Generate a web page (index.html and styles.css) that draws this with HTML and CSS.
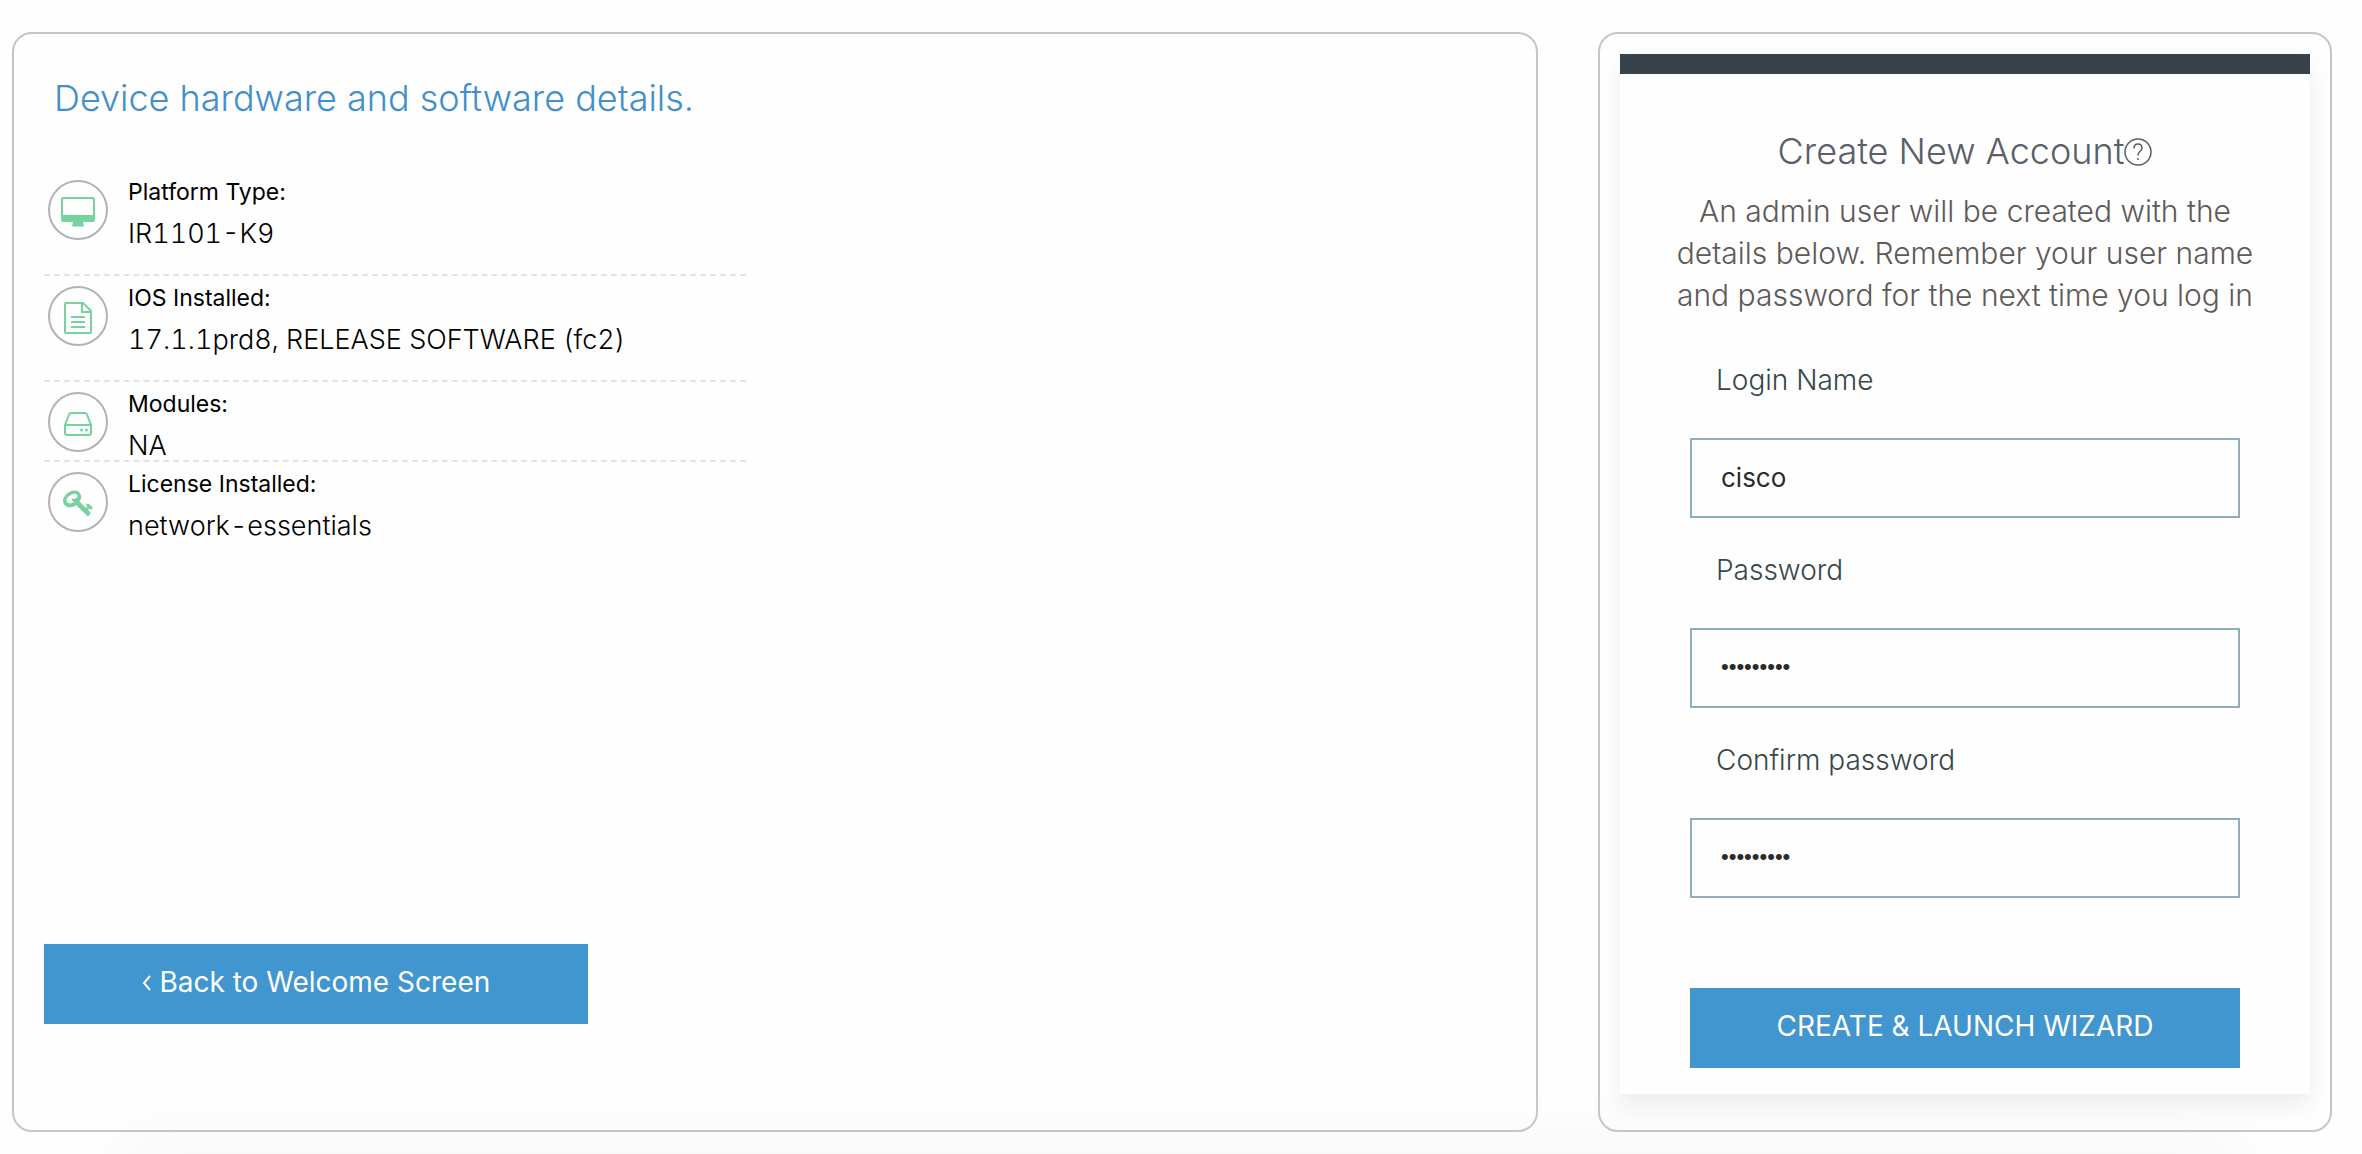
FILE: index.html
```html
<!DOCTYPE html>
<html lang="en">
<head>
    <meta charset="UTF-8">
    <meta name="viewport" content="width=device-width, initial-scale=1.0">
    <title>Create New Account</title>
    <link rel="stylesheet" href="styles.css">
</head>
<body>

    <main class="page">
        <section class="panel details">
            <h1>Device hardware and software details.</h1>

            <ul class="device-list">
                <li class="device-row">
                    <span class="device-icon">
                        <svg width="34" height="30" viewBox="0 0 34 30">
                            <path fill-rule="evenodd" d="M2.500 0h29a2.500 2.500 0 0 1 2.500 2.500v20a2.500 2.500 0 0 1-2.500 2.500h-9.500l1 4.500h-12l1-4.500h-9.500a2.500 2.500 0 0 1-2.500-2.500v-20a2.500 2.500 0 0 1 2.500-2.500zM3 2a1 1 0 0 0-1 1v15h30v-15a1 1 0 0 0-1-1z"/>
                        </svg>
                    </span>
                    <div>
                        <div class="device-label">Platform Type:</div>
                        <div class="device-value">IR1101-K9</div>
                    </div>
                </li>
                <li class="device-row">
                    <span class="device-icon">
                        <svg class="line-icon" width="28" height="32" viewBox="0 0 28 32">
                            <path d="M2 1h17l8 8v21a1 1 0 0 1-1 1h-24a1 1 0 0 1-1-1v-28a1 1 0 0 1 1-1zM18 1v9h9M7 15h14M7 20h14M7 25h14"/>
                        </svg>
                    </span>
                    <div>
                        <div class="device-label">IOS Installed:</div>
                        <div class="device-value">17.1.1prd8, RELEASE SOFTWARE (fc2)</div>
                    </div>
                </li>
                <li class="device-row compact">
                    <span class="device-icon">
                        <svg class="line-icon" width="28" height="24" viewBox="0 0 28 24">
                            <path d="M7 1h14q1.500 0 2 1.500l4 10.500v8q0 2-2 2h-22q-2 0-2-2v-8l4-10.500q.5-1.500 2-1.500zM1 14q0-1 2-1h22q2 0 2 1"/>
                            <circle class="dot" cx="17.500" cy="18" r="1.500"/>
                            <circle class="dot" cx="22.500" cy="18" r="1.500"/>
                        </svg>
                    </span>
                    <div>
                        <div class="device-label">Modules:</div>
                        <div class="device-value">NA</div>
                    </div>
                </li>
                <li class="device-row">
                    <span class="device-icon">
                        <svg width="30" height="28" viewBox="0 0 30 28">
                            <path fill-rule="evenodd" d="M3 4.500C7 .5 13-1 16 2s2.500 6.500.5 9.500l6.500 6.500 1.500-1.500-1.500-1.500 2-1.800 5 4.600-2 2-1.500-1.200-1.500 1.500 3 3-3 3.500L13 15c-3 2.500-8 3.500-11 .5S-.5 8 3 4.500zM6.500 6c-3 1.500-3.500 4-2.500 6 1.500 2 5 2 7-.5-2-.5-2.500-1.500-2-3 2 .8 4 0 5.500-1.500.5-3.500-3.500-4.500-8-1z"/>
                        </svg>
                    </span>
                    <div>
                        <div class="device-label">License Installed:</div>
                        <div class="device-value">network-essentials</div>
                    </div>
                </li>
            </ul>

            <button class="btn back-btn" type="button">
                <svg width="10" height="18" viewBox="0 0 10 18"><path d="M8 2l-6 7 6 7"/></svg>
                Back to Welcome Screen
            </button>
        </section>

        <section class="panel account">
            <form class="card">
                <h2>Create New Account<svg class="help" width="28" height="28" viewBox="0 0 28 28" stroke-width="1.500"><circle cx="14" cy="14" r="13"/><path d="M10 10.500q0-4.500 4-4.500t4 4q0 2-2 3.500t-2 4M14 20v2"/></svg></h2>
                <p class="intro">An admin user will be created with the details below. Remember your user name and password for the next time you log in</p>

                <div class="field">
                    <label for="login">Login Name</label>
                    <input type="text" id="login" value="cisco">
                </div>
                <div class="field">
                    <label for="password">Password</label>
                    <input type="password" id="password" value="password1">
                </div>
                <div class="field">
                    <label for="confirm">Confirm password</label>
                    <input type="password" id="confirm" value="password1">
                </div>

                <button class="btn create-btn" type="button">CREATE &amp; LAUNCH WIZARD</button>
            </form>
        </section>
    </main>

</body>
</html>
```

FILE: styles.css
```css
* {
    box-sizing: border-box;
}
body {
    font-family: Inter, "Liberation Sans", sans-serif;
    font-weight: 300;
    background-color: #fefefe;
    margin: 0;
}
.page {
    position: relative;
    z-index: 0;
    overflow: hidden;
    display: grid;
    grid-template-columns: 1526fr 734fr;
    gap: 60px;
    min-height: 100vh;
    padding: 32px 30px 22px 12px;
}
/* soft shadow rising from the bottom edge */
.page::after {
    content: "";
    position: absolute;
    z-index: -1;
    left: 120px;
    right: 120px;
    bottom: -40px;
    height: 40px;
    box-shadow: 0 0 80px rgba(0, 0, 0, 0.06);
}
.panel {
    border: 2px solid #c6c6c6;
    border-radius: 20px;
}
.details {
    display: flex;
    flex-direction: column;
    padding: 42px 30px 106px;
}
h1,
h2 {
    font-size: 36px;
    font-weight: 300;
    line-height: 44px;
    margin: 0;
}
h1 {
    color: #4190cb;
    padding-left: 10px;
    margin-bottom: 50px;
}
.device-list {
    list-style: none;
    width: 48%;
    margin: 0;
    padding: 0;
}
.device-row {
    display: flex;
    gap: 20px;
    padding: 0 4px 26px;
    color: #000;
    border-bottom: 2px dashed #e3e3e3;
}
.device-row.compact {
    padding-bottom: 0;
}
.device-row:last-child {
    border-bottom: none;
}
.device-icon {
    display: flex;
    justify-content: center;
    align-items: center;
    flex: none;
    width: 60px;
    height: 60px;
    margin-top: 10px;
    padding-top: 4px;
    border: 2px solid #b3b3b3;
    border-radius: 50%;
}
.device-icon svg {
    fill: #78d2a0;
}
.device-icon .line-icon {
    fill: none;
    stroke: #78d2a0;
    stroke-width: 2;
}
.device-icon .dot {
    fill: #78d2a0;
    stroke: none;
}
.device-label {
    font-size: 23px;
    font-weight: 400;
    line-height: 44px;
}
.device-value {
    font-size: 27px;
    font-variant-numeric: tabular-nums;
    line-height: 28px;
    margin-top: 6px;
}
.btn {
    height: 80px;
    padding: 0 20px 4px;
    background-color: #4196d0;
    color: white;
    border: none;
    font-family: inherit;
    font-size: 28px;
    font-weight: 400;
    cursor: pointer;
}
.btn:hover {
    background-color: #3584bb;
}
.back-btn {
    width: 37.2%;
    margin-top: auto;
}
.back-btn svg {
    fill: none;
    stroke: white;
    stroke-width: 2;
}
.account {
    padding: 20px 20px 36px;
}
.card {
    display: flex;
    flex-direction: column;
    padding: 55px 70px 26px;
    background-color: #fefefe;
    border-top: 20px solid #37424b;
    box-shadow: 0 12px 20px rgba(20, 50, 40, 0.08);
}
h2 {
    color: #596069;
    text-align: center;
}
.help {
    fill: none;
    stroke: #596069;
    vertical-align: -2px;
}
.intro {
    font-size: 30px;
    line-height: 42px;
    color: #5f5958;
    text-align: center;
    margin: 17px -30px 12px;
}
.field {
    display: flex;
    flex-direction: column;
    padding-top: 32px;
}
.field label {
    font-size: 28px;
    line-height: 40px;
    color: #37474a;
    padding-left: 26px;
    margin-bottom: 38px;
}
.field input {
    height: 80px;
    padding: 0 29px 2px;
    background-color: #fefefe;
    color: #2b2b2b;
    border: 2px solid #90adbd;
    border-radius: 0;
    font-family: inherit;
    font-size: 26px;
    font-weight: 400;
}
.field input[type="password"] {
    font-family: "Liberation Sans", sans-serif;
    font-size: 22px;
}
.create-btn {
    margin-top: 90px;
}
```
